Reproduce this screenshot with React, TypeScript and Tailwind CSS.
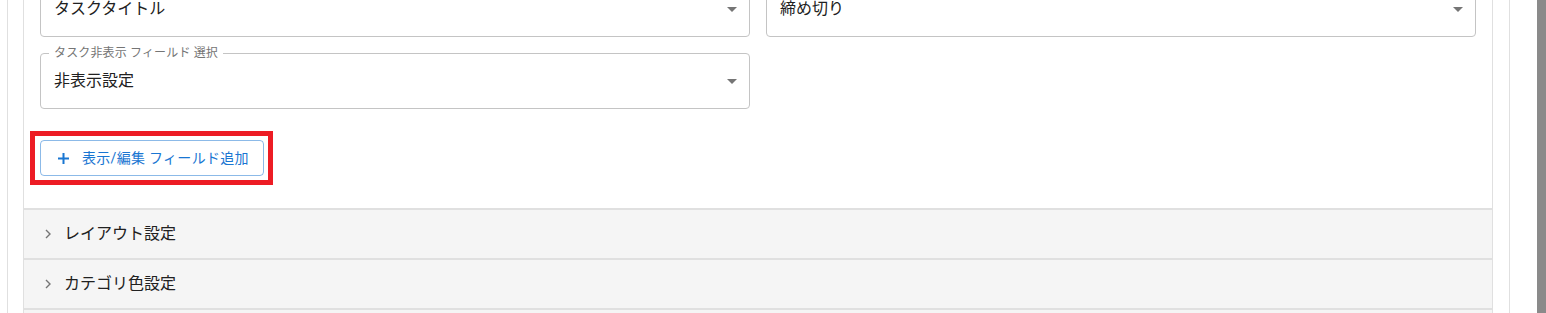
import type { ReactNode } from "react";

const FONT = "font-['Roboto','Noto_Sans_CJK_JP',sans-serif]";

function ArrowDrop() {
  return (
    <svg width="10" height="5" viewBox="0 0 10 5" className="shrink-0">
      <path d="M0 0 L10 0 L5 5 Z" fill="#757575" />
    </svg>
  );
}

interface SelectProps {
  value: string;
  label?: string;
  className?: string;
}

function SelectField({ value, label, className = "" }: SelectProps) {
  return (
    <div className={`relative h-[56px] rounded-[4px] border border-[#c4c4c4] bg-white flex items-center pl-[13px] pr-[12px] ${className}`}>
      {/* floating label sits over the outline */}
      {label && (
        <span className="absolute -top-[9px] left-[8px] bg-white px-[5px] text-[12px] leading-[16px] tracking-[0.15px] text-[#757575]">
          {label}
        </span>
      )}
      <span className="flex-1 text-[16px] leading-[24px] text-[#212121]">{value}</span>
      <ArrowDrop />
    </div>
  );
}

function AccordionRow({ children }: { children: ReactNode }) {
  return (
    <div className="h-[50px] border-t-2 border-[#e0e0e0] bg-[#f5f5f5] flex items-center pl-[21px]">
      <svg width="6" height="10" viewBox="0 0 6 10" className="shrink-0">
        <path d="M1 1 L5 5 L1 9" fill="none" stroke="#757575" strokeWidth="1.4" />
      </svg>
      <span className="ml-[13px] text-[16px] leading-[24px] text-[#212121]">{children}</span>
    </div>
  );
}

export default function App() {
  return (
    <div className={`w-[1546px] h-[313px] overflow-hidden bg-white flex ${FONT}`}>
      {/* page column */}
      <div className="ml-[7px] w-[1503px] border-l border-r border-[#e0e0e0] pl-[15px] pr-[16px] flex flex-col">
        {/* settings panel */}
        <div className="border-l border-r border-[#e0e0e0] flex flex-col">
          <div className="px-4 -mt-[19px] pb-[23px]">
            <div className="grid grid-cols-2 gap-4">
              <SelectField value="タスクタイトル" />
              <SelectField value="締め切り" />
              <SelectField value="非表示設定" label="タスク非表示 フィールド 選択" />
            </div>

            {/* highlighted add button */}
            <div className="mt-[22px] -ml-[10px] flex w-fit border-[5px] border-[#ed1c24] p-[4px] pl-[5px]">
              <button className="h-[36px] w-[224px] rounded-[4px] border border-[#1976d2]/50 flex items-center pl-[17px] text-[#1976d2]">
                <svg width="11" height="11" viewBox="0 0 11 11" className="shrink-0">
                  <path d="M5.5 0 V11 M0 5.5 H11" stroke="#1976d2" strokeWidth="2" />
                </svg>
                <span className="ml-[13px] text-[14px] leading-[20px] tracking-[0.3px]">表示/編集 フィールド追加</span>
              </button>
            </div>
          </div>

          <AccordionRow>レイアウト設定</AccordionRow>
          <AccordionRow>カテゴリ色設定</AccordionRow>
          <AccordionRow>{""}</AccordionRow>
        </div>
      </div>

      <div className="flex-1" />
      {/* scrollbar thumb */}
      <div className="w-[9px] h-full bg-[#8a8a8a]" />
    </div>
  );
}
